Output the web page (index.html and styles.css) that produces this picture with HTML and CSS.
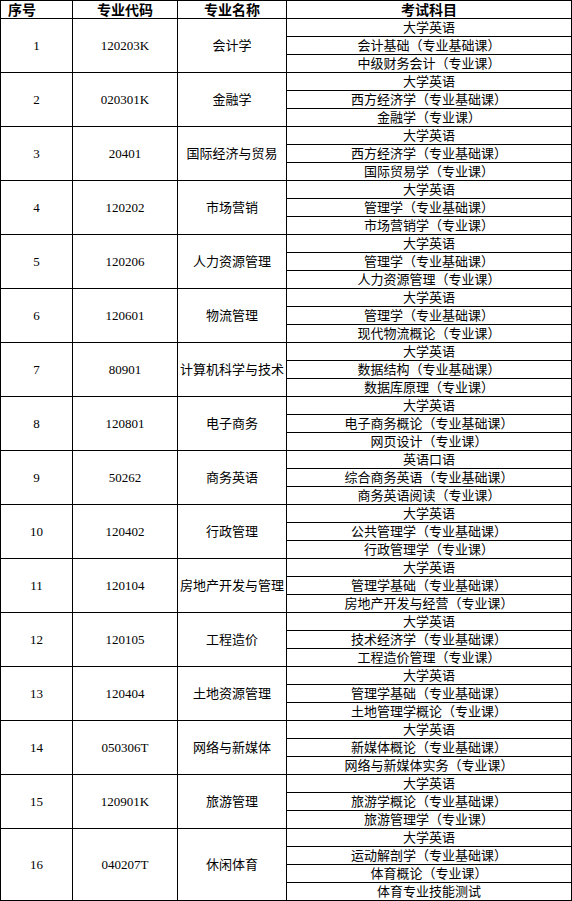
FILE: index.html
```html
<!DOCTYPE html>
<html lang="zh">
<head>
<meta charset="utf-8">
<title>专业考试科目</title>
<link rel="stylesheet" href="styles.css">
</head>
<body>
<table class="exam">
<colgroup><col class="c1"><col class="c2"><col class="c3"><col class="c4"></colgroup>
<thead>
<tr><th class="first">序号</th><th>专业代码</th><th>专业名称</th><th>考试科目</th></tr>
</thead>
<tbody>
<tr><td rowspan="3">1</td><td rowspan="3">120203K</td><td rowspan="3">会计学</td><td>大学英语</td></tr>
<tr><td>会计基础（专业基础课）</td></tr>
<tr><td>中级财务会计（专业课）</td></tr>
<tr><td rowspan="3">2</td><td rowspan="3">020301K</td><td rowspan="3">金融学</td><td>大学英语</td></tr>
<tr><td>西方经济学（专业基础课）</td></tr>
<tr><td>金融学（专业课）</td></tr>
<tr><td rowspan="3">3</td><td rowspan="3">20401</td><td rowspan="3">国际经济与贸易</td><td>大学英语</td></tr>
<tr><td>西方经济学（专业基础课）</td></tr>
<tr><td>国际贸易学（专业课）</td></tr>
<tr><td rowspan="3">4</td><td rowspan="3">120202</td><td rowspan="3">市场营销</td><td>大学英语</td></tr>
<tr><td>管理学（专业基础课）</td></tr>
<tr><td>市场营销学（专业课）</td></tr>
<tr><td rowspan="3">5</td><td rowspan="3">120206</td><td rowspan="3">人力资源管理</td><td>大学英语</td></tr>
<tr><td>管理学（专业基础课）</td></tr>
<tr><td>人力资源管理（专业课）</td></tr>
<tr><td rowspan="3">6</td><td rowspan="3">120601</td><td rowspan="3">物流管理</td><td>大学英语</td></tr>
<tr><td>管理学（专业基础课）</td></tr>
<tr><td>现代物流概论（专业课）</td></tr>
<tr><td rowspan="3">7</td><td rowspan="3">80901</td><td rowspan="3">计算机科学与技术</td><td>大学英语</td></tr>
<tr><td>数据结构（专业基础课）</td></tr>
<tr><td>数据库原理（专业课）</td></tr>
<tr><td rowspan="3">8</td><td rowspan="3">120801</td><td rowspan="3">电子商务</td><td>大学英语</td></tr>
<tr><td>电子商务概论（专业基础课）</td></tr>
<tr><td>网页设计（专业课）</td></tr>
<tr><td rowspan="3">9</td><td rowspan="3">50262</td><td rowspan="3">商务英语</td><td>英语口语</td></tr>
<tr><td>综合商务英语（专业基础课）</td></tr>
<tr><td>商务英语阅读（专业课）</td></tr>
<tr><td rowspan="3">10</td><td rowspan="3">120402</td><td rowspan="3">行政管理</td><td>大学英语</td></tr>
<tr><td>公共管理学（专业基础课）</td></tr>
<tr><td>行政管理学（专业课）</td></tr>
<tr><td rowspan="3">11</td><td rowspan="3">120104</td><td rowspan="3">房地产开发与管理</td><td>大学英语</td></tr>
<tr><td>管理学基础（专业基础课）</td></tr>
<tr><td>房地产开发与经营（专业课）</td></tr>
<tr><td rowspan="3">12</td><td rowspan="3">120105</td><td rowspan="3">工程造价</td><td>大学英语</td></tr>
<tr><td>技术经济学（专业基础课）</td></tr>
<tr><td>工程造价管理（专业课）</td></tr>
<tr><td rowspan="3">13</td><td rowspan="3">120404</td><td rowspan="3">土地资源管理</td><td>大学英语</td></tr>
<tr><td>管理学基础（专业基础课）</td></tr>
<tr><td>土地管理学概论（专业课）</td></tr>
<tr><td rowspan="3">14</td><td rowspan="3">050306T</td><td rowspan="3">网络与新媒体</td><td>大学英语</td></tr>
<tr><td>新媒体概论（专业基础课）</td></tr>
<tr><td>网络与新媒体实务（专业课）</td></tr>
<tr><td rowspan="3">15</td><td rowspan="3">120901K</td><td rowspan="3">旅游管理</td><td>大学英语</td></tr>
<tr><td>旅游学概论（专业基础课）</td></tr>
<tr><td>旅游管理学（专业课）</td></tr>
<tr><td rowspan="4">16</td><td rowspan="4">040207T</td><td rowspan="4">休闲体育</td><td>大学英语</td></tr>
<tr><td>运动解剖学（专业基础课）</td></tr>
<tr><td>体育概论（专业课）</td></tr>
<tr><td>体育专业技能测试</td></tr>
</tbody>
</table>
</body>
</html>
```

FILE: styles.css
```css
html, body {
  margin: 0;
  padding: 0;
  background: #ffffff;
}

.exam {
  border-collapse: collapse;
  table-layout: fixed;
  width: 571px;
  font-family: "Liberation Serif", "Noto Sans CJK SC", serif;
  font-size: 13px;
  color: #000000;
}

.c1 { width: 72px; }
.c2 { width: 105px; }
.c3 { width: 109px; }
.c4 { width: 285px; }

.exam th,
.exam td {
  border: 1px solid #000000;
  padding: 0;
  height: 17px;
  line-height: 17px;
  text-align: center;
  vertical-align: middle;
  white-space: nowrap;
  overflow: hidden;
}

.exam th {
  font-family: "Noto Sans CJK SC", sans-serif;
  font-weight: bold;
  font-size: 14px;
}

.exam th.first {
  text-align: left;
  padding-left: 7px;
}
```
